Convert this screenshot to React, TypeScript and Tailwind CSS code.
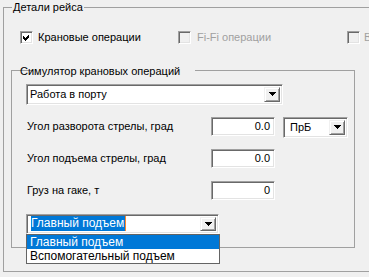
import React from "react";

function Checkbox({ checked, disabled }: { checked?: boolean; disabled?: boolean }) {
  return (
    <span
      className={
        "w-[13px] h-[13px] shrink-0 flex items-center justify-center border border-t-[#a0a0a0] border-l-[#a0a0a0] border-b-white border-r-white shadow-[inset_1px_1px_0_#696969,inset_-1px_-1px_0_#e3e3e3] " +
        (disabled ? "bg-[#f0f0f0]" : "bg-white")
      }
    >
      {checked && (
        <svg width="7" height="7" viewBox="0 0 7 7" shapeRendering="crispEdges">
          <path d="M0 2 L2 4 L6 0 L6 3 L2 7 L0 5 Z" fill="#000" />
        </svg>
      )}
    </span>
  );
}

function DropButton() {
  return (
    <span className="w-[16px] h-full shrink-0 flex items-center justify-center bg-[#f0f0f0] border border-t-[#f0f0f0] border-l-[#f0f0f0] border-b-[#696969] border-r-[#696969] shadow-[inset_1px_1px_0_#ffffff,inset_-1px_-1px_0_#a0a0a0]">
      <svg width="7" height="4" viewBox="0 0 7 4" shapeRendering="crispEdges">
        <path d="M0 0 H7 L3.5 4 Z" fill="#000" />
      </svg>
    </span>
  );
}

const sunken =
  "border border-t-[#a0a0a0] border-l-[#a0a0a0] border-b-white border-r-white shadow-[inset_1px_1px_0_#696969,inset_-1px_-1px_0_#e3e3e3]";

function Combo({ text, className }: { text: string; className: string }) {
  return (
    <div className={"flex items-stretch bg-white p-[2px] " + sunken + " " + className}>
      <span className="flex-1 flex items-center pl-[1px] leading-none">{text}</span>
      <DropButton />
    </div>
  );
}

function Field({ value }: { value: string }) {
  return (
    <div className={"w-[64px] h-[19px] bg-white flex items-center justify-end pr-[4px] leading-none " + sunken}>
      {value}
    </div>
  );
}

export default function App() {
  return (
    <div className="w-[369px] h-[277px] overflow-hidden bg-[#f0f0f0] text-[11px] text-black font-['Liberation_Sans',Arial,sans-serif]">
      <fieldset className="ml-[3px] w-[420px] h-[272px] border border-[#a0a0a0]">
        <legend className="ml-[8px] px-[1px] leading-[14px]">Детали рейса</legend>
        <div className="flex items-center mt-[15px] pl-[16px]">
          <label className="w-[158px] flex items-center gap-[5px]">
            <Checkbox checked />
            <span>Крановые операции</span>
          </label>
          <label className="w-[169px] flex items-center gap-[6px] text-[#a0a0a0]">
            <Checkbox disabled />
            <span>Fi-Fi операции</span>
          </label>
          <label className="flex items-center gap-[4px] text-[#a0a0a0]">
            <Checkbox disabled />
            <span className="whitespace-nowrap">Водолазные</span>
          </label>
        </div>
        <fieldset className="ml-[7px] mt-[18px] w-[344px] h-[184px] border border-[#a0a0a0] pl-[14px]">
          <legend className="ml-[7px] px-[1px] leading-[14px] -translate-x-[14px]">
            Симулятор крановых операций
          </legend>
          <Combo text="Работа в порту" className="mt-[6px] w-[257px] h-[21px]" />
          <div className="mt-[12px] flex flex-col">
            <div className="h-[32px] flex items-start">
              <span className="w-[185px] h-[19px] flex items-center pl-[1px]">Угол разворота стрелы, град</span>
              <Field value="0.0" />
              <Combo text="ПрБ" className="ml-[8px] w-[65px] h-[21px] pl-[5px]" />
            </div>
            <div className="h-[32px] flex items-start">
              <span className="w-[185px] h-[19px] flex items-center pl-[1px]">Угол подъема стрелы, град</span>
              <Field value="0.0" />
            </div>
            <div className="h-[32px] flex items-start">
              <span className="w-[185px] h-[19px] flex items-center pl-[1px]">Груз на гаке, т</span>
              <Field value="0" />
            </div>
          </div>
          <div className="relative mt-[1px] w-[193px] h-[20px] text-[12px]">
            <div className={"w-full h-full flex items-stretch bg-white p-[2px] " + sunken}>
              <span className="flex-1 flex items-center pl-[2px]">
                <span className="bg-[#0078d7] text-white leading-[15px] pr-[1px]">Главный подъем</span>
                <span className="w-[1px] h-[15px] bg-[#ff8728]" />
              </span>
              <DropButton />
            </div>
            <div className="absolute left-0 top-full w-[194px] bg-white border border-[#646464] z-10">
              <div className="bg-[#0078d7] text-white h-[14px] leading-[14px] pl-[3px]">Главный подъем</div>
              <div className="h-[14px] leading-[14px] pl-[3px]">Вспомогательный подъем</div>
            </div>
          </div>
        </fieldset>
      </fieldset>
    </div>
  );
}
